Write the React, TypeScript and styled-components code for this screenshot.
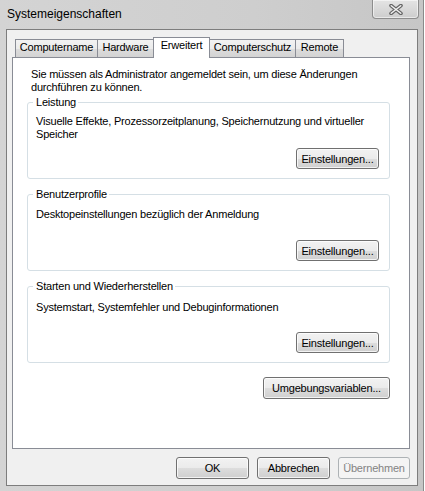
import React from "react";
import styled, { createGlobalStyle } from "styled-components";

const GlobalStyle = createGlobalStyle`
  html, body {
    margin: 0;
    padding: 0;
    background: #ffffff;
  }
  body {
    font-family: "Liberation Sans", Arial, sans-serif;
    font-size: 11px;
    color: #000000;
  }
`;

const Window = styled.div`
  width: 424px;
  height: 491px;
  box-sizing: border-box;
  padding: 0 5px 0 6px;
  border-right: 1px solid #8a8a8a;
  background: linear-gradient(to right, #d4d4d4 0%, #cecece 60%, #c6c6c6 100%);
  display: flex;
  flex-direction: column;
`;

const TitleBar = styled.div`
  height: 29px;
  flex: none;
  display: flex;
  justify-content: space-between;
  align-items: flex-start;
`;

const Title = styled.div`
  margin: 7px 0 0 1px;
  font-size: 12px;
  line-height: 15px;
  color: #000000;
`;

const CloseButton = styled.div`
  width: 47px;
  height: 19px;
  margin-right: -1px;
  box-sizing: border-box;
  border: 1px solid #8d8d8d;
  border-top: none;
  border-radius: 0 0 4px 4px;
  background: linear-gradient(#e4e4e4 0%, #d9d9d9 50%, #cdcdcd 100%);
  box-shadow: inset 0 0 0 1px rgba(255, 255, 255, 0.55);
  display: flex;
  align-items: center;
  justify-content: center;
`;

const Client = styled.div`
  height: 457px;
  flex: none;
  box-sizing: border-box;
  border: 1px solid #7d7d7d;
  background: #f0f0f0;
  padding: 7px 7px 6px 5px;
  display: flex;
  flex-direction: column;
`;

const TabStrip = styled.div`
  height: 21px;
  margin: 0 0 -1px 3px;
  display: flex;
  align-items: flex-end;
  position: relative;
  z-index: 1;
`;

const Tab = styled.div<{ $w: number; $active?: boolean }>`
  width: ${(p) => p.$w}px;
  height: ${(p) => (p.$active ? 21 : 18)}px;
  margin-bottom: ${(p) => (p.$active ? 0 : 1)}px;
  box-sizing: border-box;
  border: 1px solid #898c95;
  border-bottom: none;
  padding-top: 1px;
  background: ${(p) =>
    p.$active
      ? "#ffffff"
      : "linear-gradient(#f2f2f2 0%, #ebebeb 50%, #dddddd 51%, #d3d3d3 100%)"};
  position: relative;
  z-index: ${(p) => (p.$active ? 2 : 1)};
  display: flex;
  justify-content: center;
  line-height: 13px;
  letter-spacing: -0.2px;
  white-space: nowrap;

  & + & {
    margin-left: -1px;
  }
`;

const Panel = styled.div`
  height: 392px;
  flex: none;
  box-sizing: border-box;
  border: 1px solid #898c95;
  background: #ffffff;
  padding: 10px 19px 0 14px;
  display: flex;
  flex-direction: column;
`;

const Text = styled.div`
  line-height: 13px;
  letter-spacing: -0.2px;
  white-space: nowrap;
`;

const Intro = styled(Text)`
  margin-left: 4px;
`;

const Groups = styled.div`
  margin-top: 2px;
  display: flex;
  flex-direction: column;
  gap: 9px;
`;

const GroupBox = styled.fieldset`
  margin: 0;
  min-width: 0;
  padding: 6px 10px 9px 8px;
  border: 1px solid #d5dfe5;
  border-radius: 3px;
`;

const Legend = styled.legend`
  margin-left: -3px;
  padding: 0 2px 0 3px;
  line-height: 13px;
  letter-spacing: -0.2px;
`;

const Description = styled(Text)<{ $shift: number }>`
  height: 26px;
  box-sizing: border-box;
  padding-top: ${(p) => p.$shift}px;
`;

const ButtonRow = styled.div`
  margin-top: 7px;
  display: flex;
  justify-content: flex-end;
`;

const Button = styled.button<{ $w: number; $h?: number }>`
  width: ${(p) => p.$w}px;
  height: ${(p) => p.$h ?? 21}px;
  box-sizing: border-box;
  padding: 0;
  border: 1px solid #707070;
  border-radius: 3px;
  background: linear-gradient(#f2f2f2 0%, #ebebeb 50%, #dddddd 51%, #cfcfcf 100%);
  box-shadow: inset 0 0 0 1px rgba(255, 255, 255, 0.75);
  font-family: "Liberation Sans", Arial, sans-serif;
  font-size: 11px;
  letter-spacing: -0.2px;
  color: #000000;

  &:disabled {
    border-color: #adb2b5;
    background: #f4f4f4;
    box-shadow: none;
    color: #838383;
  }
`;

const EnvButton = styled(Button)`
  align-self: flex-end;
  margin-top: 14px;
`;

const Footer = styled.div`
  margin-top: 8px;
  display: flex;
  justify-content: flex-end;
  gap: 8px;
`;

const tabs = [
  { label: "Computername", w: 83 },
  { label: "Hardware", w: 57 },
  { label: "Erweitert", w: 57, active: true },
  { label: "Computerschutz", w: 87 },
  { label: "Remote", w: 49 },
];

const groups = [
  {
    title: "Leistung",
    shift: 0,
    lines: ["Visuelle Effekte, Prozessorzeitplanung, Speichernutzung und virtueller", "Speicher"],
  },
  { title: "Benutzerprofile", shift: 1, lines: ["Desktopeinstellungen bezüglich der Anmeldung"] },
  { title: "Starten und Wiederherstellen", shift: 2, lines: ["Systemstart, Systemfehler und Debuginformationen"] },
];

const CloseGlyph = () => (
  <svg width="14" height="11" viewBox="0 0 14 11">
    <path d="M2 1.5 L12 9.5 M12 1.5 L2 9.5" stroke="#666666" strokeWidth="3.6" strokeLinecap="round" />
    <path d="M2.2 1.7 L11.8 9.3 M11.8 1.7 L2.2 9.3" stroke="#f2f2f2" strokeWidth="1.4" strokeLinecap="round" />
  </svg>
);

const App = () => {
  return (
    <>
      <GlobalStyle />
      <Window>
        <TitleBar>
          <Title>Systemeigenschaften</Title>
          <CloseButton>
            <CloseGlyph />
          </CloseButton>
        </TitleBar>
        <Client>
          <TabStrip>
            {tabs.map((t) => (
              <Tab key={t.label} $w={t.w} $active={t.active}>
                {t.label}
              </Tab>
            ))}
          </TabStrip>
          <Panel>
            <Intro>
              Sie müssen als Administrator angemeldet sein, um diese Änderungen
              <br />
              durchführen zu können.
            </Intro>
            <Groups>
              {groups.map((g) => (
                <GroupBox key={g.title}>
                  <Legend>{g.title}</Legend>
                  <Description $shift={g.shift}>
                    {g.lines.map((l, i) => (
                      <div key={i}>{l}</div>
                    ))}
                  </Description>
                  <ButtonRow>
                    <Button $w={83}>Einstellungen...</Button>
                  </ButtonRow>
                </GroupBox>
              ))}
            </Groups>
            <EnvButton $w={127} $h={22}>
              Umgebungsvariablen...
            </EnvButton>
          </Panel>
          <Footer>
            <Button $w={73} $h={22}>OK</Button>
            <Button $w={73} $h={22}>Abbrechen</Button>
            <Button $w={72} $h={22} disabled>
              Übernehmen
            </Button>
          </Footer>
        </Client>
      </Window>
    </>
  );
};

export default App;
